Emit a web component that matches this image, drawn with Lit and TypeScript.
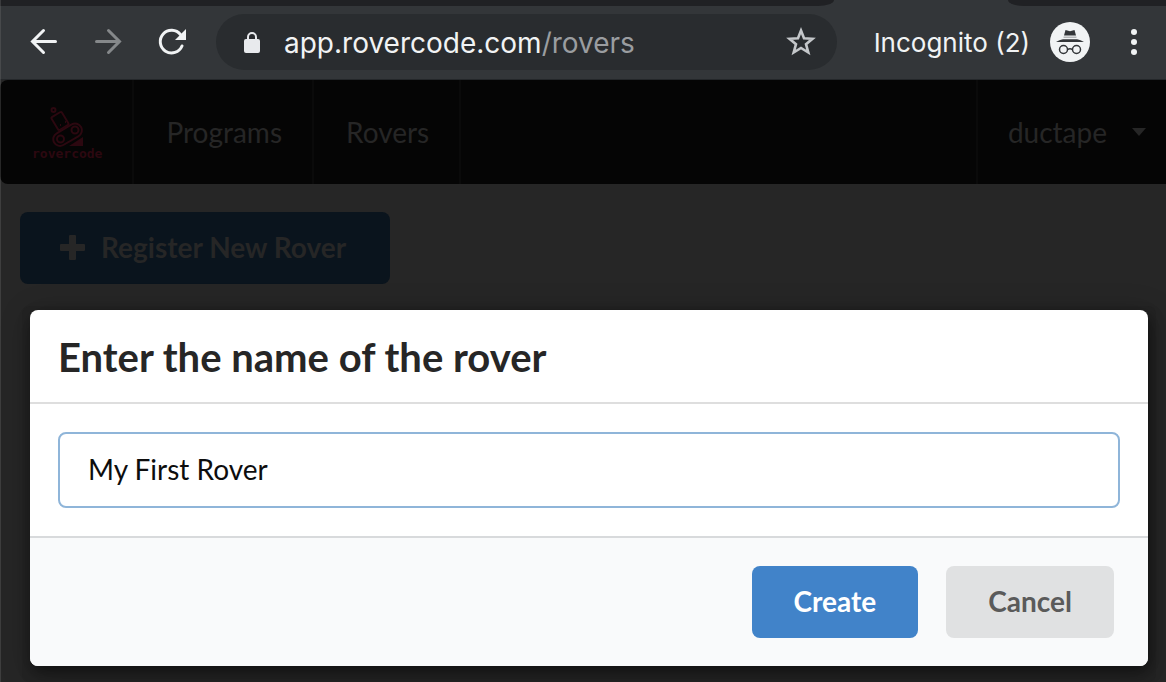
import { LitElement, html, css } from "lit";
import { customElement, state } from "lit/decorators.js";

@customElement("browser-bar")
class BrowserBar extends LitElement {
  static styles = css`
    :host { display: block; background: #333639; font-family: Inter, sans-serif; font-size: 28px; line-height: 36px; color: #f1f3f4; }
    .tabs { display: flex; height: 6px; justify-content: space-between; }
    .tab { background: #202124; }
    .left { flex: 1; border-bottom-right-radius: 16px 6px; }
    .active { width: 174px; }
    .right { width: 158px; border-bottom-left-radius: 16px 6px; }
    .bar { display: flex; align-items: center; padding: 8px 22px 9px 30px; border-bottom: 1px solid #24272a; }
    button { border: 0; padding: 0; background: none; color: inherit; display: flex; }
    .tools { display: flex; gap: 36px; margin-right: 30px; }
    .back { color: #f1f3f4; }
    .dim { color: #85888a; }
    .omni { flex: 1; min-width: 0; display: flex; align-items: center; height: 56px; border-radius: 28px; background: #292c2f; padding: 0 20px 0 26px; }
    .url, .who { padding-top: 2px; white-space: nowrap; }
    .url { flex: 1; min-width: 0; margin-left: 22px; overflow: hidden; color: #f1f3f4; text-decoration: none; }
    .path { color: #9a9da0; }
    .who { margin: 0 20px 0 37px; font-size: 26px; }
    .menu { margin-left: 34px; }
    svg { display: block; }
  `;
  render() {
    return html`
      <div class="tabs"><div class="tab left"></div><div class="active"></div><div class="tab right"></div></div>
      <div class="bar">
        <div class="tools">
          <button class="back" aria-label="Back"><svg width="28" height="28" fill="none" stroke="currentColor" stroke-width="3" stroke-linecap="round"><path d="M25.500 13.500H3M13.500 2.500L2.500 13.500L13.500 24.500"/></svg></button>
          <button class="dim" aria-label="Forward"><svg width="28" height="28" fill="none" stroke="currentColor" stroke-width="3" stroke-linecap="round"><path d="M2.500 13.500H25M14.500 2.500L25.500 13.500L14.500 24.500"/></svg></button>
          <button aria-label="Reload"><svg width="28" height="28"><path d="M24 18A11.300 11.300 0 1 1 22.500 6.700" fill="none" stroke="currentColor" stroke-width="3" stroke-linecap="round"/><path d="M28 1V12H17Z" fill="currentColor"/></svg></button>
        </div>
        <div class="omni">
          <svg width="20" height="24" fill="#e8eaed"><rect x="2" y="9" width="16" height="14" rx="2"/><path d="M6 10V7a4 4 0 0 1 8 0v3" fill="none" stroke="#e8eaed" stroke-width="2"/></svg>
          <a class="url" href="#rovers">app.rovercode.com<span class="path">/rovers</span></a>
          <button aria-label="Bookmark"><svg width="32" height="32" viewBox="0 0 32 32"><path d="M16 4.500L19 12.300L27.500 12.800L21 18.200L23.300 26.500L16 22L8.700 26.500L11 18.200L4.500 12.800L13 12.300Z" fill="none" stroke="#c4c7ca" stroke-width="2.600"/></svg></button>
        </div>
        <span class="who">Incognito (2)</span>
        <svg width="40" height="40"><circle cx="20" cy="20" r="20" fill="#f1f3f4"/><path d="M15.500 8L20 9.200L24.500 8L26 13.500H14ZM6 20C9 18.500 10 17.800 13 17.300H27C30 17.800 31 18.500 34 20Z" fill="#333639"/><path d="M13.500 14.500H26.500V16H13.500Z" fill="#b5b7b9"/><g fill="none" stroke="#333639" stroke-width="1.500"><circle cx="13.500" cy="27.500" r="4"/><circle cx="26.500" cy="27.500" r="4"/><path d="M17.500 27.500Q20 26 22.500 27.500"/></g></svg>
        <button class="menu" aria-label="Menu"><svg width="20" height="28" fill="currentColor"><circle cx="10" cy="4" r="3"/><circle cx="10" cy="14" r="3"/><circle cx="10" cy="24" r="3"/></svg></button>
      </div>`;
  }
}

@customElement("site-nav")
class SiteNav extends LitElement {
  static styles = css`
    :host { display: block; }
    nav { display: flex; height: 104px; background: #050505; border-radius: 8px 0 0 8px; line-height: 36px; }
    a, button { display: flex; align-items: center; box-sizing: border-box; padding: 0 30px 0 32px; border: 0 solid #0a0a0a; border-right-width: 2px; color: #262626; font: inherit; background: none; text-decoration: none; }
    .brand { flex-direction: column; justify-content: center; padding-top: 4px; color: #2c0810; font: bold 13px/14px "DejaVu Sans Mono", monospace; }
    .user { margin-left: auto; border-width: 0 0 0 2px; padding: 0 19px 0 30px; gap: 24px; }
    svg { display: block; }
  `;
  render() {
    return html`<nav>
      <a class="brand" href="#home"><svg width="40" height="40" viewBox="0 0 40 40" fill="none" stroke="currentColor" stroke-width="2"><circle cx="6.500" cy="3" r="2"/><rect x="7" y="6.500" width="12" height="15" rx="1.500" transform="rotate(-31 13 14)"/><path d="M9.700 26.300L24.700 17.300A6.500 6.500 0 0 1 31.300 29.300L16.300 38A6.500 6.500 0 0 1 9.700 26.300Z"/><circle cx="13.500" cy="32" r="3.500"/><circle cx="28" cy="23" r="3.500"/><path d="M36 30V39H22Z" fill="currentColor" stroke="none"/><path d="M13 18h1M18 15h1"/></svg><span>rovercode</span></a>
      <a href="#programs">Programs</a>
      <a href="#rovers">Rovers</a>
      <button class="user">ductape<svg width="16" height="8" fill="currentColor"><path d="M1 0H15L8 8Z"/></svg></button>
    </nav>`;
  }
}

@customElement("rover-dialog")
class RoverDialog extends LitElement {
  static styles = css`
    :host { display: block; border-radius: 8px; overflow: hidden; background: #fff; box-shadow: 2px 6px 14px rgba(0, 0, 0, .4), 2px 6px 30px 4px rgba(0, 0, 0, .2); }
    h1 { margin: 0; padding: 23px 28px 21px; font-size: 40px; line-height: 48px; font-weight: 700; color: #262626; border-bottom: 2px solid #dedede; }
    .content { padding: 28px; }
    input { display: block; box-sizing: border-box; width: 100%; height: 76px; padding: 0 28px 2px; border: 2px solid #8fb5d9; border-radius: 8px; outline: 0; background: #fff; color: #0d0d0d; font: inherit; }
    .actions { display: flex; justify-content: flex-end; gap: 28px; padding: 28px 34px 28px 28px; border-top: 2px solid #d8dadc; background: #f9fafb; }
    button { height: 72px; padding: 0 42px 2px; border: 0; border-radius: 8px; font: inherit; font-weight: 700; background: #e0e1e2; color: #5a5a5a; }
    .primary { background: #4183c9; color: #fff; }
  `;
  @state() private name = "My First Rover";
  render() {
    return html`
      <h1 id="title">Enter the name of the rover</h1>
      <div class="content"><input type="text" aria-labelledby="title" .value=${this.name} @input=${(e: Event) => (this.name = (e.target as HTMLInputElement).value)}></div>
      <div class="actions"><button class="primary">Create</button><button>Cancel</button></div>`;
  }
}

@customElement("app-root")
class AppRoot extends LitElement {
  static styles = css`
    :host { display: flex; flex-direction: column; min-height: 100vh; position: relative; background: #262626; font-family: Lato, sans-serif; font-size: 28px; line-height: 36px; }
    :host::after { content: ""; position: absolute; inset: 0 auto 0 0; width: 1px; background: rgba(120, 120, 120, .3); }
    .page { flex: 1; display: flex; flex-direction: column; position: relative; }
    .body { flex: 1; display: flex; flex-direction: column; align-items: flex-start; padding: 28px 10px 0 20px; }
    .register { display: flex; align-items: center; gap: 16px; height: 72px; padding: 0 44px 2px 40px; border: 0; border-radius: 8px; background: #0a141d; color: #262626; font: inherit; font-weight: 700; }
    .card { flex: 1; align-self: stretch; margin: 22px 0 0 2px; border-radius: 8px; background: #242424; }
    .modal { position: absolute; inset: 0; padding: 230px 18px 16px 30px; }
    svg { display: block; }
  `;
  render() {
    return html`
      <browser-bar></browser-bar>
      <div class="page">
        <site-nav></site-nav>
        <div class="body">
          <button class="register"><svg width="25" height="26" viewBox="0 -1 25 26" fill="currentColor"><path d="M10 0h5q1 0 1 1v8h8q1 0 1 1v5q0 1-1 1h-8v8q0 1-1 1h-5q-1 0-1-1v-8h-8q-1 0-1-1v-5q0-1 1-1h8v-8q0-1 1-1z"/></svg>Register New Rover</button>
          <div class="card"></div>
        </div>
        <div class="modal"><rover-dialog role="dialog" aria-modal="true"></rover-dialog></div>
      </div>`;
  }
}
